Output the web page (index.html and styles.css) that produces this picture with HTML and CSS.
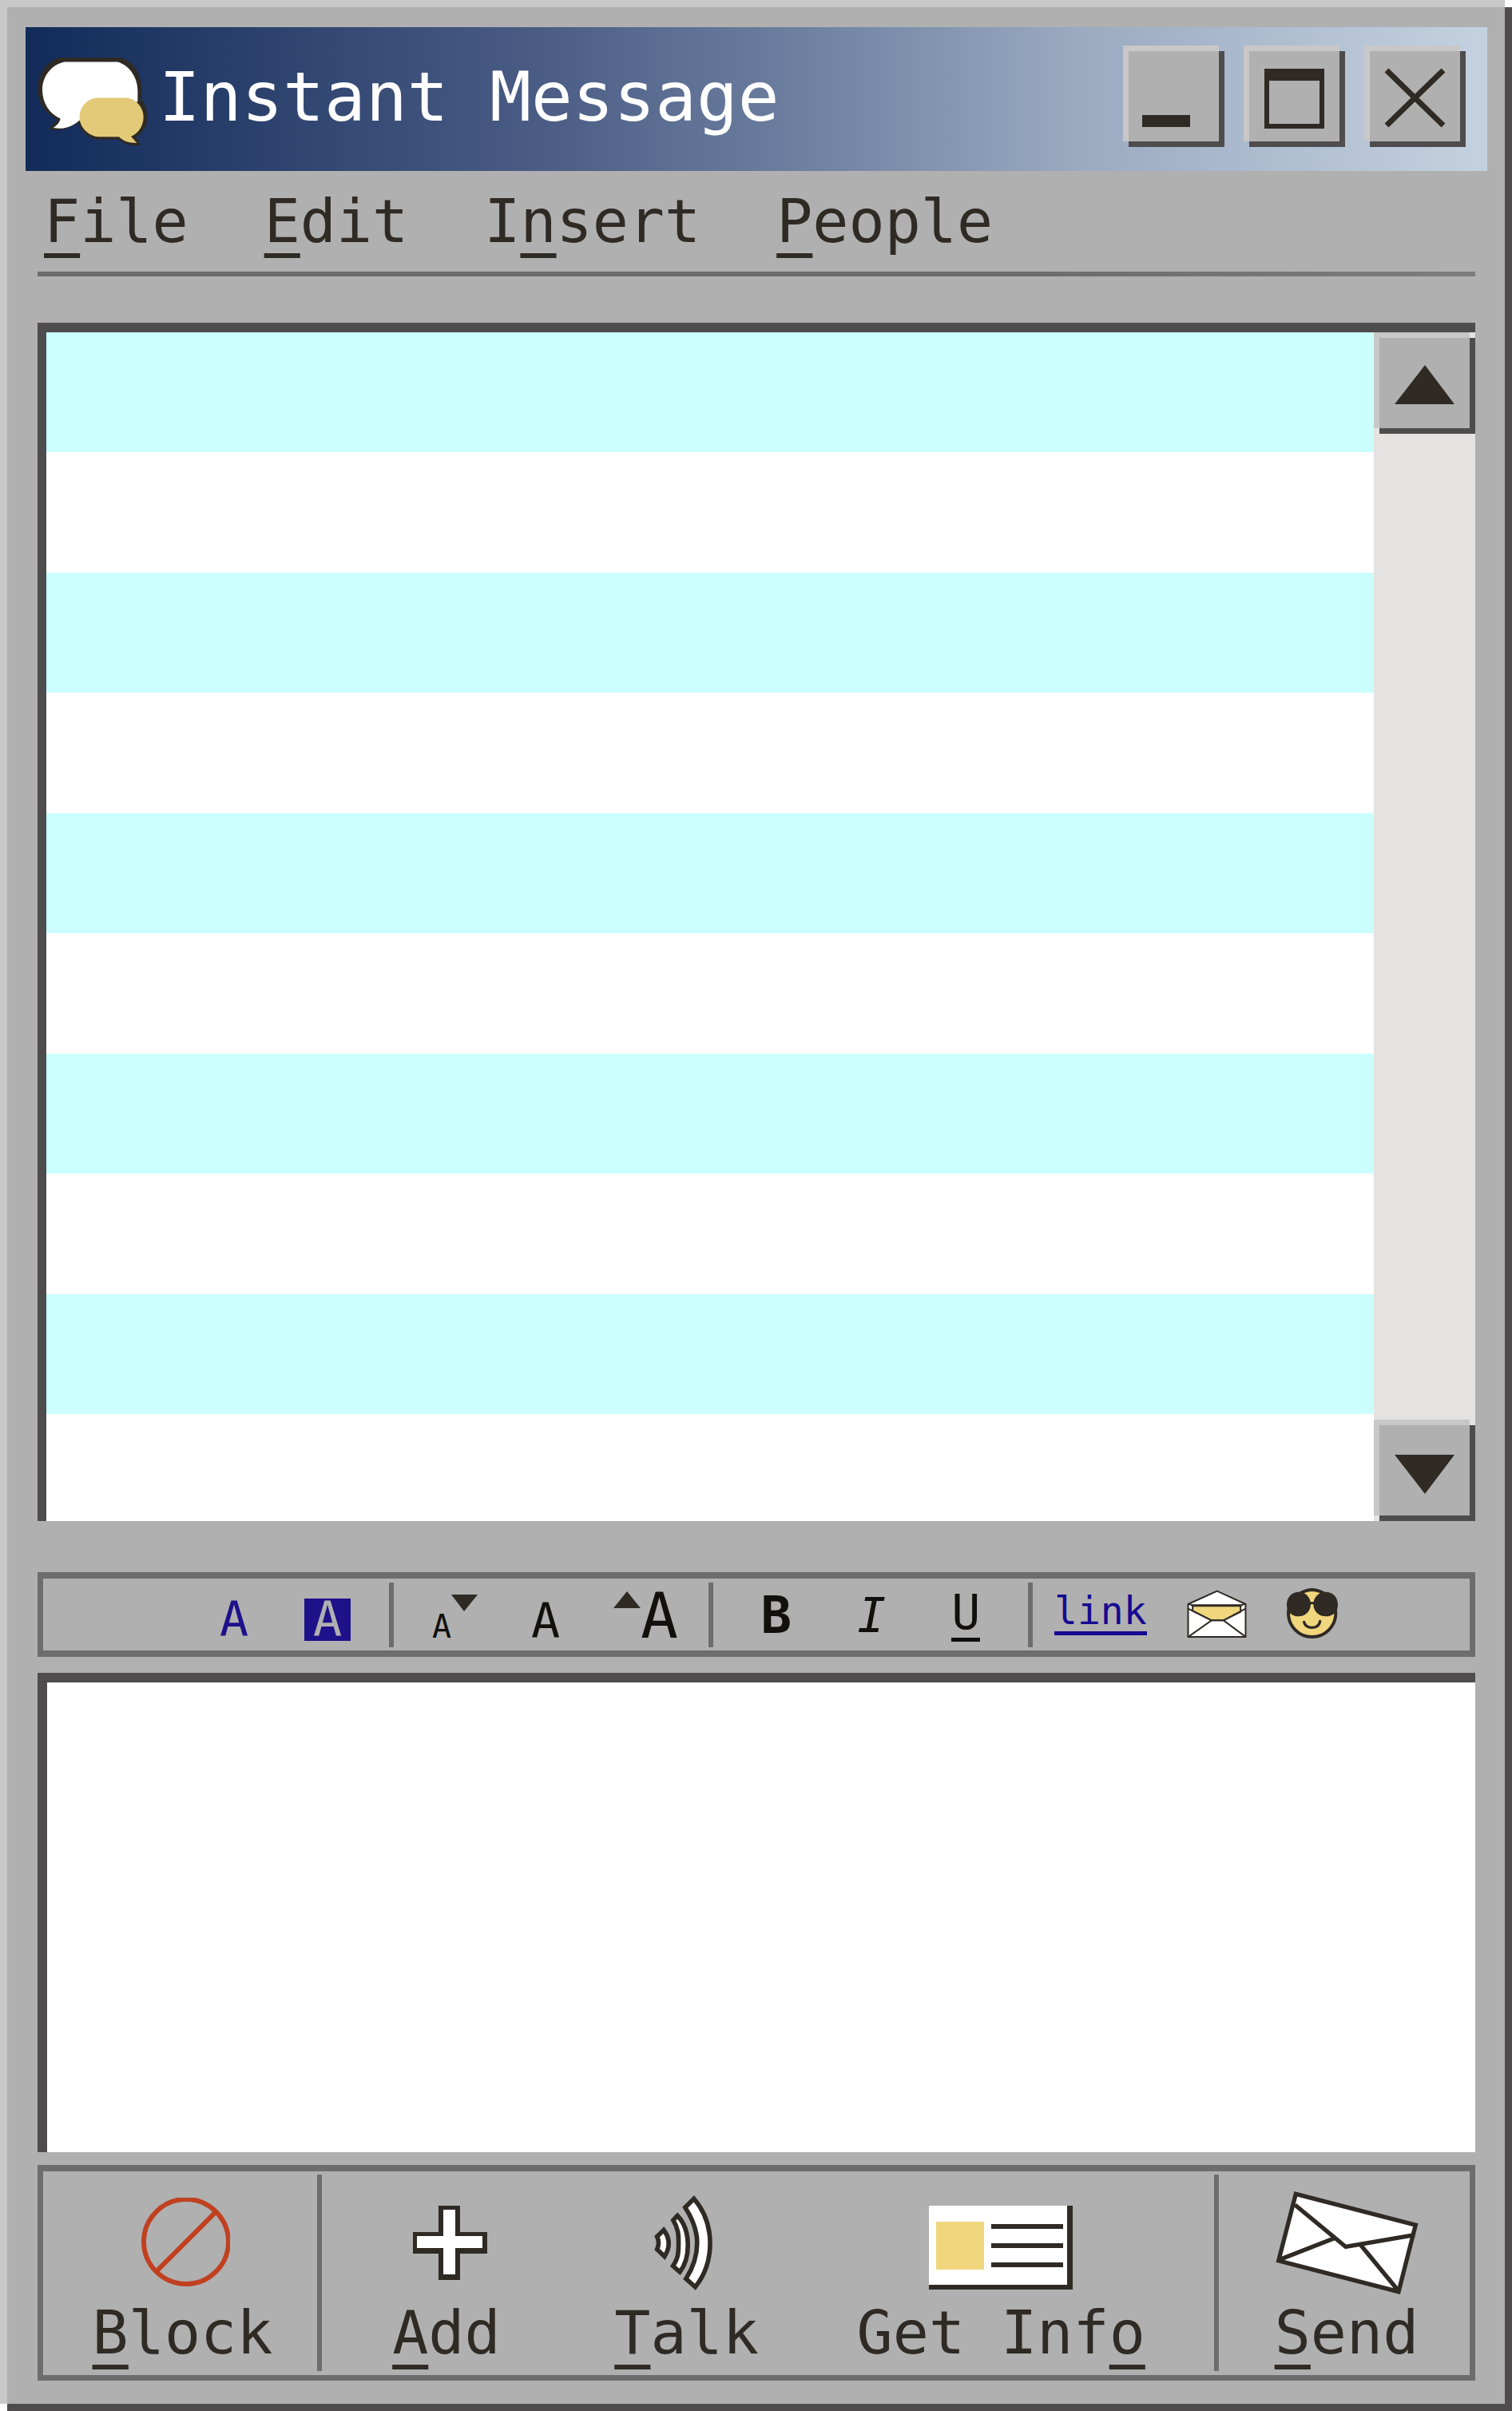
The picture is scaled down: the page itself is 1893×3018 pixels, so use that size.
FILE: index.html
```html
<!DOCTYPE html>
<html lang="en">
<head>
<meta charset="utf-8">
<title>Instant Message</title>
<meta name="viewport" content="width=device-width, initial-scale=1">
<link rel="stylesheet" href="styles.css">
</head>
<body>
<main class="window bevel">
  <header class="titlebar">
    <svg class="logo" viewBox="22 -2 413 367" aria-hidden="true">
      <path fill="#2f2a24" d="M105 34H330C380 45 413 95 413 150Q414 175 408 190C425 205 435 230 435 260C435 295 415 320 392 333L410 365H375C355 362 340 352 325 343H245C210 340 185 310 172 278C150 297 120 312 62 304L98 268C50 248 22 205 22 150C22 95 60 45 105 34Z"/>
      <path fill="#fff" d="M122 51H322C365 62 398 108 398 158V200L180 270C155 290 125 308 80 299C95 288 105 278 107 264C65 245 39 205 39 155C39 105 75 60 122 51Z"/>
      <path fill="#e3ca79" d="M240 186H360C395 192 420 225 420 258C420 292 400 320 373 331L395 356C365 356 345 350 328 333H250C210 328 179 295 179 258C179 222 205 192 240 186Z"/>
    </svg>
    <h1 class="title">Instant Message</h1>
    <div class="window-controls">
      <button class="square bevel" type="button" aria-label="Minimize">
        <svg viewBox="0 0 127 127"><path fill="#2f2a24" d="M24 87h60v15H24z"/></svg>
      </button>
      <button class="square bevel" type="button" aria-label="Maximize">
        <svg viewBox="0 0 127 127"><path fill="#2f2a24" fill-rule="evenodd" d="M26 29h75v75H26zM32 44v54h63V44z"/></svg>
      </button>
      <button class="square bevel" type="button" aria-label="Close">
        <svg viewBox="0 0 127 127"><path stroke="#2f2a24" stroke-width="7" d="M28 31L99 100M99 31L28 100"/></svg>
      </button>
    </div>
  </header>

  <div class="content">
    <nav class="menu" aria-label="Main menu">
      <button type="button"><u>F</u>ile</button>
      <button type="button"><u>E</u>dit</button>
      <button type="button">I<u>n</u>sert</button>
      <button type="button"><u>P</u>eople</button>
    </nav>

    <section class="chat" aria-label="Conversation">
      <div class="log" role="log"></div>
      <div class="scrollbar">
        <button class="square bevel" type="button" aria-label="Scroll up">
          <svg viewBox="0 0 127 127"><path fill="#2f2a24" d="M64 41L101 90H26z"/></svg>
        </button>
        <button class="square bevel" type="button" aria-label="Scroll down">
          <svg viewBox="0 0 127 127"><path fill="#2f2a24" d="M64 93L101 44H26z"/></svg>
        </button>
      </div>
    </section>

    <div class="format" role="toolbar" aria-label="Formatting">
      <div class="group group-color">
        <button class="ink" type="button" aria-label="Text color">A</button>
        <button class="highlight" type="button" aria-label="Highlight color">A</button>
      </div>
      <div class="group group-size">
        <button class="smaller" type="button" aria-label="Smaller text"><span>A</span><svg width="33" height="21" viewBox="0 0 33 21"><path fill="#2f2a24" d="M0 0H33L16 21z"/></svg></button>
        <button type="button" aria-label="Normal text">A</button>
        <button class="larger" type="button" aria-label="Larger text"><svg width="34" height="21" viewBox="0 0 34 21"><path fill="#2f2a24" d="M0 21H34L17 0z"/></svg><span>A</span></button>
      </div>
      <div class="group group-style">
        <button class="bold" type="button" aria-label="Bold">B</button>
        <button class="italic" type="button" aria-label="Italic">I</button>
        <button class="underlined" type="button" aria-label="Underline">U</button>
      </div>
      <div class="group group-insert">
        <a class="underlined link" href="#">link</a>
        <button type="button" aria-label="Insert mail">
          <svg width="75" height="60" viewBox="559 29 222 180" fill="none" stroke="#2f2a24" stroke-width="6">
            <path fill="#fff" d="M562 83L671 34L778 83V206H562Z"/>
            <path fill="#f0d77e" d="M579 88H759V112L695 144H650L579 108Z"/>
            <path stroke-width="9" d="M577 88H761"/>
            <path d="M562 84Q568 80 578 88M778 84Q772 80 760 88M562 100L650 144H695L778 100M650 144L565 204M695 144L776 204"/>
          </svg>
        </button>
        <button type="button" aria-label="Insert emoticon">
          <svg width="64" height="63" viewBox="936 36 192 189" fill="none" stroke="#2f2a24">
            <path fill="#f0d77e" stroke-width="12" d="M1031 42C1000 42 942 70 942 128C942 180 982 219 1031 219C1080 219 1120 180 1120 128C1120 70 1062 42 1031 42Z"/>
            <path fill="#2f2a24" stroke="none" d="M936 98C936 70 955 50 982 50C1006 50 1026 70 1026 96C1026 122 1006 142 980 142C954 142 936 124 936 98ZM1128 98C1128 70 1109 50 1082 50C1056 50 1036 70 1036 96C1036 122 1056 142 1083 142C1110 142 1128 124 1128 98Z"/>
            <path stroke-width="9" d="M1018 92H1044"/>
            <path stroke-width="10" stroke-linecap="round" d="M1001 163Q1006 184 1031 184Q1057 184 1061 160"/>
          </svg>
        </button>
      </div>
    </div>

    <textarea class="editor" aria-label="Message"></textarea>

    <div class="actions">
      <div class="cell">
        <button class="action" type="button">
          <span class="icon"><svg width="119" height="112" viewBox="-8 0 119 112" fill="none" stroke="#c04020" stroke-width="6"><circle cx="56" cy="55" r="53"/><path d="M19 92L93 18"/></svg></span>
          <span class="label"><u>B</u>lock</span>
        </button>
      </div>
      <div class="cell people">
        <button class="action" type="button">
          <span class="icon"><svg width="103" height="93" viewBox="-10 0 103 93"><path fill="#2f2a24" d="M32 0h27v33h34v27H59v33H32V60H0V33h32z"/><path fill="#fff" d="M38 5h15v33h34v15H53v33H38V53H5V38h33z"/></svg></span>
          <span class="label"><u>A</u>dd</span>
        </button>
        <button class="action" type="button">
          <span class="icon"><svg width="81" height="119" viewBox="110 54 244 357" fill="#fff" stroke="#2f2a24" stroke-width="17">
            <path d="M146 184L121 209Q132 232 121 257L149 284Q182 232 146 184Z"/>
            <path d="M198 130L182 147C201 180 202 200 202 232C202 275 200 290 181 320L207 342C232 310 238 270 237 235C236 190 222 155 198 130Z"/>
            <path d="M260 66L227 99C260 150 272 190 272 232C272 285 258 325 230 368L265 399C305 350 321 290 321 232C320 165 298 110 260 66Z"/>
          </svg></span>
          <span class="label"><u>T</u>alk</span>
        </button>
        <button class="action" type="button">
          <span class="icon"><svg width="180" height="117" viewBox="0 -12 180 117"><path fill="#2f2a24" d="M0 0h180v105H0z"/><path fill="#fff" d="M0 0h173v99H0z"/><path fill="#f0d77e" d="M9 20h60v60H9z"/><path fill="#2f2a24" d="M78 23h90v6H78zM78 47h90v6H78zM78 71h90v6H78z"/></svg></span>
          <span class="label">Get Inf<u>o</u></span>
        </button>
      </div>
      <div class="cell">
        <button class="action" type="button">
          <span class="icon"><svg width="179" height="129" viewBox="52 35 536 388" fill="none" stroke="#2f2a24" stroke-width="16"><path fill="#fff" d="M127 45L578 162L514 413L62 296Z"/><path d="M124 86L315 244L574 199M66 292L272 212M372 238L512 408"/></svg></span>
          <span class="label"><u>S</u>end</span>
        </button>
      </div>
    </div>
  </div>
</main>
</body>
</html>
```
FILE: styles.css
```css
:root {
  --face: #b0b0b0;
  --light: #c8c8c8;
  --dark: #4e4c4d;
  --line: #6d6d6d;
  --text: #2f2a24;
  --ink: #1e118a;
}

* {
  box-sizing: border-box;
}

body {
  margin: 0;
  background: #fff;
  color: var(--text);
  font-family: "DejaVu Sans Mono", monospace;
}

button {
  margin: 0;
  padding: 0;
  border: 0;
  background: none;
  color: inherit;
  font: inherit;
  line-height: 1;
  cursor: pointer;
}

svg {
  display: block;
  flex: none;
}

u {
  text-decoration: underline 6px;
  text-underline-offset: 14px;
  text-decoration-skip-ink: none;
}

/* Raised surface: a light plate at the top left over a dark one at the bottom right */
.bevel {
  --edge: 7px;
  background:
    linear-gradient(var(--face), var(--face)) center / calc(100% - 2 * var(--edge)) calc(100% - 2 * var(--edge)) no-repeat,
    linear-gradient(var(--light), var(--light)) left top / calc(100% - var(--edge)) calc(100% - var(--edge)) no-repeat,
    linear-gradient(var(--dark), var(--dark)) right bottom / calc(100% - var(--edge)) calc(100% - var(--edge)) no-repeat;
}

.window {
  --edge: 9px;
  display: flex;
  flex-direction: column;
  min-height: 100vh;
  padding: 34px 31px 38px 32px;
}

.square {
  width: 127px;
  height: 127px;
  flex: none;
}

/* Title bar */
.titlebar {
  display: flex;
  align-items: center;
  gap: 14px;
  padding: 23px 27px 30px 15px;
  background: linear-gradient(90deg, #122b5a, #4a5c84 35%, #6e80a0 53%, #9aaac1 72%, #c4d1e0);
}

.logo {
  width: 138px;
  height: 122px;
}

.title {
  flex: 1;
  margin: 0;
  color: #fff;
  font-size: 86px;
  font-weight: 400;
  line-height: 1;
}

.window-controls {
  display: flex;
  gap: 24px;
}

/* Everything under the title bar */
.content {
  display: flex;
  flex: 1;
  flex-direction: column;
  padding: 0 15px;
}

.menu {
  display: flex;
  gap: 95px;
  padding: 0 8px;
  border-bottom: 6px solid;
  border-image: linear-gradient(90deg, var(--line) 70%, #7d7d7d) 1;
}

.menu button {
  font-size: 75px;
  line-height: 126px;
}

/* Conversation */
.chat {
  display: flex;
  flex: 1;
  min-height: 600px;
  margin-top: 58px;
  border-top: 12px solid var(--dark);
  border-left: 11px solid var(--dark);
}

.log {
  flex: 1;
  background: repeating-linear-gradient(#cbfffe 0 150px, #fff 150px 301px);
}

.scrollbar {
  display: flex;
  flex-direction: column;
  justify-content: space-between;
  background: #e4e3e1;
}

/* Formatting bar */
.format {
  display: grid;
  grid-template-columns: 433fr 400fr 400fr 553fr;
  height: 106px;
  margin-top: 64px;
  border: 8px solid var(--line);
  border-width: 8px 7px;
  padding: 5px 0 4px;
  color: #11100c;
  font-size: 60px;
}

.group {
  display: flex;
  border-left: 6px solid var(--line);
}

.group-color {
  align-items: baseline;
  justify-content: flex-end;
  gap: 70px;
  padding: 16px 48px 0 0;
  border-left: 0;
  color: var(--ink);
}

.highlight {
  width: 58px;
  background: var(--ink);
  color: var(--face);
  line-height: 53px;
}

.group-size {
  align-items: baseline;
  justify-content: space-between;
  padding: 3px 38px 0 48px;
}

.smaller,
.larger {
  display: flex;
  align-items: flex-start;
}

.smaller span,
.larger span {
  align-self: baseline;
}

.smaller span {
  margin-top: 20px;
  font-size: 40px;
}

.larger span {
  font-size: 78px;
}

.larger svg {
  margin-top: 8px;
}

.group-style {
  align-items: center;
  justify-content: center;
  gap: 82px;
}

.bold {
  font-size: 64px;
  font-weight: 700;
}

.italic {
  font-style: italic;
}

.underlined {
  padding-bottom: 2px;
  border-bottom: 5px solid;
  line-height: 1;
}

.group-insert {
  align-items: center;
  gap: 50px;
  padding: 0 0 4px 27px;
}

.link {
  color: #150a91;
  font-size: 48px;
  text-decoration: none;
}

/* Message box */
.editor {
  display: block;
  width: 100%;
  height: 600px;
  margin: 20px 0 16px;
  padding: 16px;
  border: 0 solid var(--dark);
  border-width: 12px 0 0 12px;
  outline: 0;
  background: #fff;
  color: var(--text);
  font: 60px "DejaVu Sans Mono", monospace;
  resize: none;
}

/* Bottom bar */
.actions {
  display: grid;
  grid-template-columns: 343fr 1123fr 320fr;
  border: 7px solid var(--line);
  border-top-width: 8px;
  padding: 4px 0 5px;
}

.cell {
  display: grid;
  padding: 20px 0 0 6px;
  border-left: 6px solid var(--line);
}

.cell:first-child {
  border-left: 0;
}

.people {
  grid-template-columns: 308fr 294fr 494fr;
  padding: 20px 20px 0 2px;
}

.action {
  display: flex;
  flex-direction: column;
  align-items: center;
}

.icon {
  display: flex;
  align-items: center;
  height: 130px;
}

.label {
  font-size: 75px;
  line-height: 96px;
  white-space: nowrap;
}
```
